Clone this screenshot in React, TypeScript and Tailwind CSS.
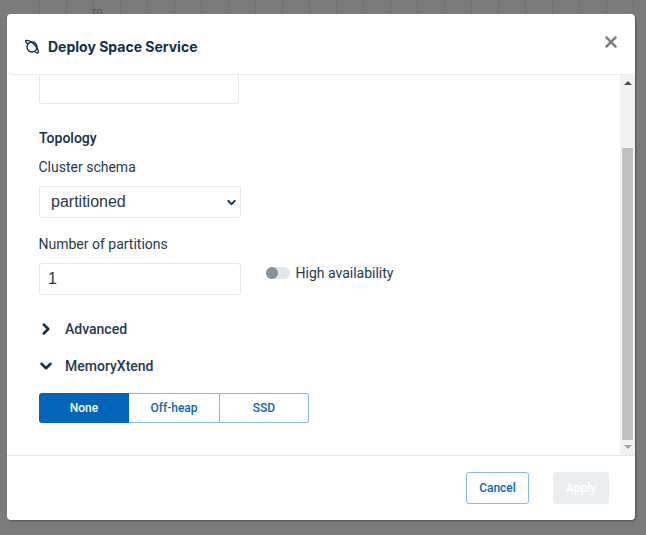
import { ChevronDown, ChevronRight, X } from "lucide-react";

const gridLines = [39, 65, 86, 113, 140, 167, 194, 221, 248, 275, 302, 329, 356, 383, 410, 437, 464, 491, 518, 545, 572, 599, 625];

function SpaceIcon() {
  return (
    <svg width="16" height="16" viewBox="0 0 16 16" fill="none" stroke="#0f3048" strokeWidth="1.4" className="shrink-0">
      <circle cx="8" cy="8" r="5" />
      <path d="M3.6 5 C1.4 2.8 1.2 1.6 2.4 1.4 C4.4 1.1 8.6 3.6 11 6.2 C13.4 8.8 15 12.4 14.2 13.6 C13.6 14.4 12 13.6 11.2 12.8" />
    </svg>
  );
}

function Label({ children }: { children: string }) {
  return <div className="-ml-[0.5px] text-[14px] leading-[20px] text-[#1f3a4e]">{children}</div>;
}

export default function App() {
  return (
    <div className="relative h-[535px] w-[646px] overflow-hidden bg-[#7b7b7b] font-['Roboto',sans-serif]">
      {/* Fondo detras del modal */}
      <div className="flex h-[14px] items-stretch">
        {gridLines.map((x, i) => (
          <div key={x} className="h-full w-px bg-[#727272]" style={{ marginLeft: i === 0 ? x : 26 }} />
        ))}
      </div>
      <span className="absolute left-[90px] top-[7px] text-[11px] leading-[13px] text-[#555]">70</span>

      {/* Modal */}
      <div className="absolute left-[7px] top-[14px] flex h-[506px] w-[628px] flex-col overflow-hidden rounded-[4px] bg-white shadow-[1px_1px_2px_rgba(0,0,0,0.35)]">
        <div className="relative flex h-[61px] shrink-0 items-center gap-[8px] rounded-b-[5px] border-b border-[#e8e9ea] pl-[17px] pt-[6px]">
          <SpaceIcon />
          <h2 className="font-['Inter',sans-serif] text-[14px] font-bold leading-[20px] text-[#0f3048]">Deploy Space Service</h2>
          <X className="absolute right-[15px] top-[19px] h-[18px] w-[18px] text-[#808080]" strokeWidth={3.4} />
        </div>

        <div className="flex min-h-0 flex-1">
          {/* Contenido */}
          <div className="min-w-0 flex-1 overflow-hidden pl-[32px]">
            <div className="-mt-[5px] h-[34px] w-[200px] rounded-[3px] border border-[#e6e8ea]" />
            <h3 className="mt-[24px] text-[14px] font-medium leading-[20px] text-[#0f3048]">Topology</h3>
            <div className="mt-[9px]"><Label>Cluster schema</Label></div>
            <div className="mt-[9px] flex h-[32px] w-[202px] items-center justify-between rounded-[3px] border border-[#e6e8ea] pl-[11px] pr-[2px] font-['Liberation_Sans',sans-serif] text-[16px] text-[#1f3a4e]">
              partitioned
              <ChevronDown className="h-[13px] w-[13px] text-[#0f3048]" strokeWidth={3.6} />
            </div>
            <div className="mt-[16px]"><Label>Number of partitions</Label></div>
            <div className="mt-[9px] flex items-center">
              <div className="flex h-[32px] w-[202px] items-center rounded-[3px] border border-[#e6e8ea] pl-[8px] font-['Liberation_Sans',sans-serif] text-[16px] text-[#1f3a4e]">1</div>
              <div className="ml-[25px] -mt-[13px] flex items-center gap-[6px]">
                <div className="h-[12px] w-[24px] rounded-full bg-[#e1e5e9]">
                  <div className="h-[12px] w-[12px] rounded-full bg-[#84939f]" />
                </div>
                <span className="-ml-[0.5px] text-[14px] leading-[20px] text-[#1f3a4e]">High availability</span>
              </div>
            </div>
            <div className="mt-[24px] -ml-[2px] flex items-center">
              <ChevronRight className="h-[18px] w-[18px] text-[#0f3048]" strokeWidth={3.4} />
              <span className="ml-[10px] text-[14px] font-medium leading-[20px] text-[#1f3a4e]">Advanced</span>
            </div>
            <div className="mt-[17px] -ml-[2px] flex items-center">
              <ChevronDown className="h-[18px] w-[18px] text-[#0f3048]" strokeWidth={3.4} />
              <span className="ml-[10px] text-[14px] font-medium leading-[20px] text-[#1f3a4e]">MemoryXtend</span>
            </div>
            <div className="mt-[17px] flex h-[30px] w-[270px] text-[12px] font-medium">
              <div className="flex w-[90px] items-center justify-center rounded-l-[3px] bg-[#0064b9] text-white">None</div>
              <div className="flex w-[91px] items-center justify-center border-y border-r border-[#85bbe3] text-[#0a66b8]">Off-heap</div>
              <div className="flex flex-1 items-center justify-center rounded-r-[3px] border-y border-r border-[#85bbe3] text-[#0a66b8]">SSD</div>
            </div>
          </div>

          {/* Barra de scroll */}
          <div className="relative flex w-[15px] shrink-0 flex-col items-center bg-[#f1f1f1]">
            <div className="mt-[6px] h-0 w-0 border-x-[4px] border-b-[4px] border-x-transparent border-b-[#505050]" />
            <div className="mt-[63px] h-[292px] w-[11px] bg-[#c1c1c1]" />
            <div className="mt-[5px] h-0 w-0 border-x-[4px] border-t-[4px] border-x-transparent border-t-[#a3a3a3]" />
          </div>
        </div>

        <div className="flex h-[65px] shrink-0 items-center justify-end gap-[24px] border-t border-[#e6e6e6] pr-[26px]">
          <button className="h-[32px] w-[63px] rounded-[3px] border border-[#85bbe3] text-[12px] font-medium text-[#0a66b8]">Cancel</button>
          <button className="h-[32px] w-[56px] rounded-[3px] bg-[#ebeef0] text-[12px] font-medium text-white">Apply</button>
        </div>
      </div>
    </div>
  );
}
